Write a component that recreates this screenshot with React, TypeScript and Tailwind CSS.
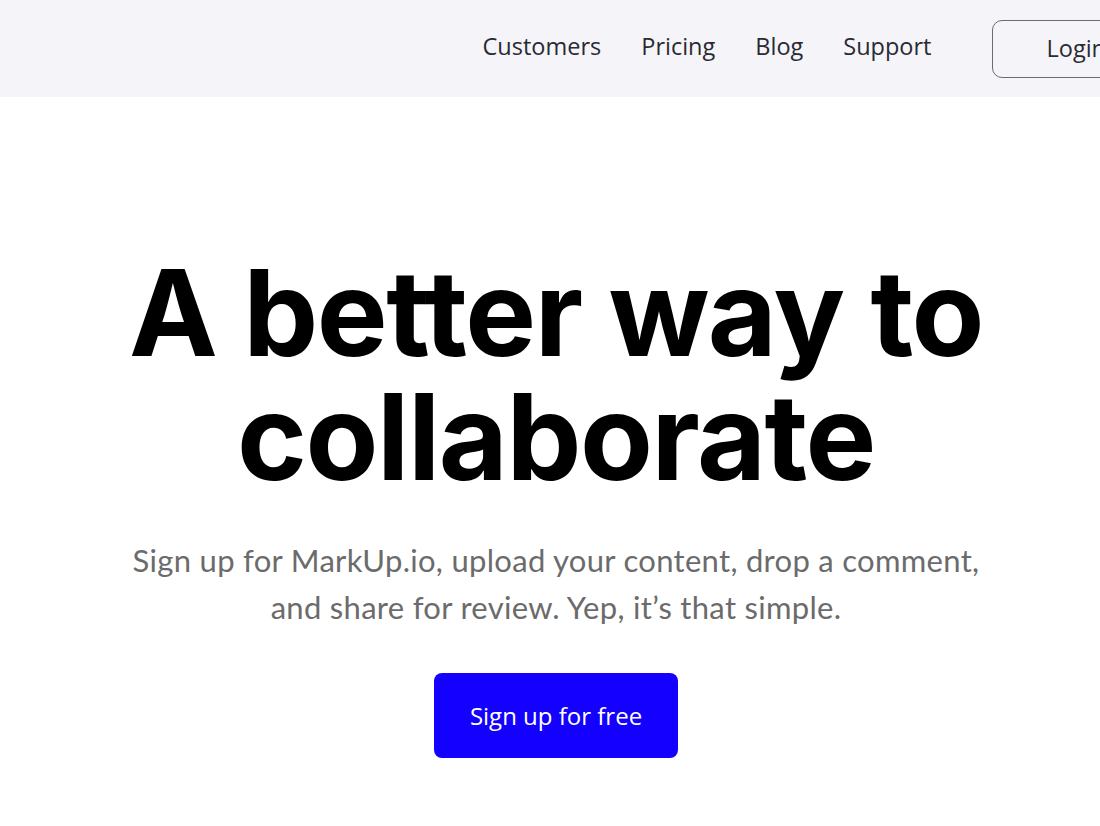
export default function App() {
  const links = ['Customers', 'Pricing', 'Blog', 'Support']

  return (
    <div className="h-[826px] w-[1100px] overflow-hidden bg-white">
      <header className="h-[97px] w-[1100px] overflow-hidden bg-[#f5f5f9]">
        <div className="flex h-full w-[1160px] items-center justify-end gap-10 pb-[4px] font-['Open_Sans',sans-serif] text-[23.5px] text-[#2a2a33]">
          {links.map((l) => (
            <a key={l} className="cursor-pointer">
              {l}
            </a>
          ))}
          <button className="ml-[21px] mt-[4px] h-[58px] shrink-0 rounded-[10px] border border-[#6b6b70] px-[53px] text-[23.5px] text-[#2a2a33]">
            Login
          </button>
        </div>
      </header>

      <main className="flex w-[1112px] flex-col items-center pt-[154px] text-center">
        <h1 className="font-['Inter',sans-serif] text-[119px] font-bold leading-[124px] tracking-[-0.012em] text-black">
          A better way to
          <br />
          collaborate
        </h1>
        <p className="mt-[38px] font-['Lato',sans-serif] text-[31px] leading-[47px] tracking-[0.3px] text-[#6b6b6b]">
          Sign up for MarkUp.io, upload your content, drop a comment,
          <br />
          and share for review. Yep, it’s that simple.
        </p>
        <button className="mt-[42px] h-[85px] w-[244px] rounded-[8px] bg-[#1400ff] font-['Open_Sans',sans-serif] text-[24px] text-white">
          Sign up for free
        </button>
      </main>
    </div>
  )
}
